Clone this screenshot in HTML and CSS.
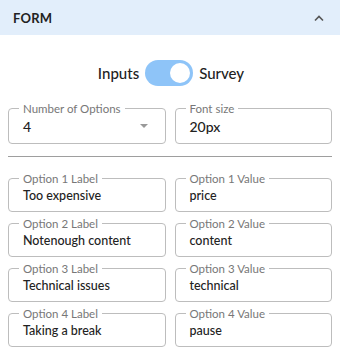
FILE: index.html
```html
<!DOCTYPE html>
<html>
<head>
  <title>Form Settings</title>
  <meta charset="UTF-8" />
  <link rel="stylesheet" href="styles.css">
</head>
<body>
  <div class="panel">
    <!-- Section header -->
    <div class="panel-header">
      <span class="panel-title">FORM</span>
      <svg class="chevron" width="12" height="8" viewBox="0 0 12 8">
        <path d="M2 6.5 L6 2.5 L10 6.5" fill="none" stroke="#555" stroke-width="1.6" />
      </svg>
    </div>

    <div class="panel-body">
      <!-- Mode toggle -->
      <div class="mode-toggle">
        <span>Inputs</span>
        <span class="switch"><span class="knob"></span></span>
        <span>Survey</span>
      </div>

      <div class="field-grid">
        <fieldset class="field large">
          <legend>Number of Options</legend>
          <div class="field-value">
            4
            <span class="caret"></span>
          </div>
        </fieldset>
        <fieldset class="field large">
          <legend>Font size</legend>
          <div class="field-value">20px</div>
        </fieldset>
      </div>

      <hr class="divider" />

      <div class="field-grid options">
        <fieldset class="field">
          <legend>Option 1 Label</legend>
          <div class="field-value">Too expensive</div>
        </fieldset>
        <fieldset class="field">
          <legend>Option 1 Value</legend>
          <div class="field-value">price</div>
        </fieldset>
        <fieldset class="field">
          <legend>Option 2 Label</legend>
          <div class="field-value">Notenough content</div>
        </fieldset>
        <fieldset class="field">
          <legend>Option 2 Value</legend>
          <div class="field-value">content</div>
        </fieldset>
        <fieldset class="field">
          <legend>Option 3 Label</legend>
          <div class="field-value">Technical issues</div>
        </fieldset>
        <fieldset class="field">
          <legend>Option 3 Value</legend>
          <div class="field-value">technical</div>
        </fieldset>
        <fieldset class="field">
          <legend>Option 4 Label</legend>
          <div class="field-value">Taking a break</div>
        </fieldset>
        <fieldset class="field">
          <legend>Option 4 Value</legend>
          <div class="field-value">pause</div>
        </fieldset>
      </div>
    </div>
  </div>
</body>
</html>
```

FILE: styles.css
```css
body {
  margin: 0;
  font-family: Lato, "Noto Sans", sans-serif;
  color: #222;
  background: #fff;
}

.panel-header {
  height: 35px;
  background: #e2eefb;
  display: flex;
  align-items: center;
  justify-content: space-between;
  padding: 0 13px;
}

.panel-title {
  font-size: 13px;
  font-weight: 700;
  letter-spacing: 0.2px;
}

.chevron {
  margin-right: 2px;
}

.panel-body {
  padding: 0 8px;
}

.mode-toggle {
  display: flex;
  justify-content: center;
  align-items: center;
  gap: 6px;
  height: 30px;
  margin: 23px 0 14px;
  font-size: 15px;
  font-weight: 500;
  padding-left: 2px;
}

.switch {
  width: 48px;
  height: 26px;
  border-radius: 13px;
  background: #8ec4f8;
  display: flex;
  align-items: center;
  justify-content: flex-end;
  padding: 0 3px;
  box-sizing: border-box;
}

.knob {
  width: 20px;
  height: 20px;
  border-radius: 50%;
  background: #fff;
}

.field-grid {
  display: grid;
  grid-template-columns: 1fr 1fr;
  column-gap: 9px;
}

.field-grid.options {
  row-gap: 5px;
}

.field {
  margin: 0;
  padding: 0 10px 6px;
  border: 1px solid #bdbdbd;
  border-radius: 4px;
  min-width: 0;
}

.field legend {
  font-size: 11.5px;
  line-height: 13px;
  color: #777;
  padding: 0 4px;
}

.field-value {
  position: relative;
  font-size: 12.5px;
  font-weight: 500;
  line-height: 18px;
  padding: 2px 4px 0;
  white-space: nowrap;
}

.field.large .field-value {
  font-size: 14px;
  line-height: 20px;
}

.caret {
  position: absolute;
  right: 7px;
  top: 9px;
  width: 0;
  height: 0;
  border-left: 4px solid transparent;
  border-right: 4px solid transparent;
  border-top: 4px solid #999;
}

.divider {
  border: none;
  border-top: 1px solid #9e9e9e;
  margin: 12px 0 15px;
}
```
